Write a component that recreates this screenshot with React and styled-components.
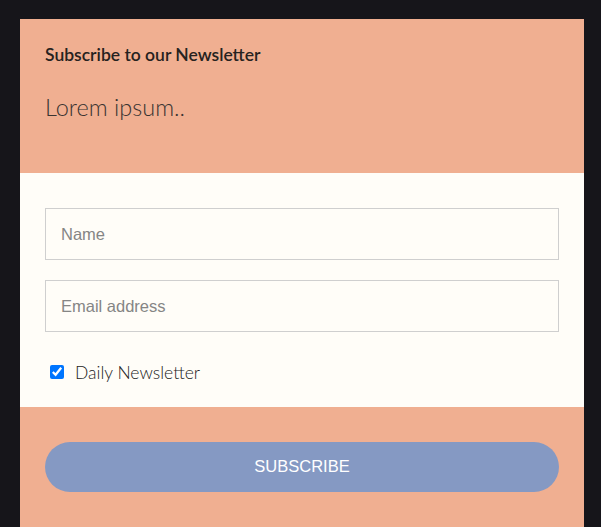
import React from "react";
import styled, { createGlobalStyle } from "styled-components";

const Global = createGlobalStyle`
  html, body { margin: 0; padding: 0; background: #16151a; }
  body { font-family: "Lato", "Noto Sans", sans-serif; }
  * { box-sizing: border-box; }
`;

const Page = styled.div`
  padding: 19px 17px 0 20px;
  min-height: 527px;
`;

const Card = styled.div`
  width: 564px;
  display: flex;
  flex-direction: column;
`;

const Header = styled.header`
  background: #f0af91;
  height: 154px;
  padding: 25px 25px 0;
`;

const Title = styled.h2`
  margin: 0;
  font-family: "Lato", sans-serif;
  font-weight: 600;
  font-size: 17.5px;
  line-height: 22px;
  color: #262220;
`;

const Lead = styled.p`
  margin: 27px 0 0;
  font-family: "Lato", sans-serif;
  font-weight: 300;
  font-size: 23.5px;
  line-height: 28px;
  color: #3a3431;
`;

const Form = styled.div`
  background: #fffdf8;
  height: 234px;
  padding: 35px 25px 0;
  display: flex;
  flex-direction: column;
  gap: 20px;
`;

const Input = styled.input`
  width: 514px;
  height: 52px;
  border: 1px solid #cfcfcf;
  background: #fffdf8;
  padding: 0 15px;
  font-family: "Liberation Sans", Arial, sans-serif;
  font-size: 16.5px;
  color: #333;
  outline: none;
  &::placeholder { color: #858585; }
`;

const CheckRow = styled.label`
  display: flex;
  align-items: center;
  margin-top: 0;
  height: 40px;
  font-family: "Lato", sans-serif;
  font-weight: 300;
  font-size: 17.5px;
  color: #222;
`;

const Check = styled.input`
  width: 14px;
  height: 14px;
  margin: 0 11px 0 5px;
`;

const Footer = styled.div`
  background: #f0af91;
  padding: 35px 25px 40px;
`;

const Button = styled.button`
  width: 514px;
  height: 50px;
  padding: 0 0 2px;
  border: none;
  border-radius: 25px;
  background: #8599c3;
  color: #ffffff;
  font-family: "Liberation Sans", Arial, sans-serif;
  font-size: 16.5px;
  text-transform: uppercase;
  cursor: pointer;
`;

export default function App() {
  return (
    <Page>
      <Global />
      <Card>
        <Header>
          <Title>Subscribe to our Newsletter</Title>
          <Lead>Lorem ipsum..</Lead>
        </Header>
        <Form>
          <Input placeholder="Name" />
          <Input placeholder="Email address" />
          <CheckRow>
            <Check type="checkbox" defaultChecked />
            Daily Newsletter
          </CheckRow>
        </Form>
        <Footer>
          <Button>Subscribe</Button>
        </Footer>
      </Card>
    </Page>
  );
}
